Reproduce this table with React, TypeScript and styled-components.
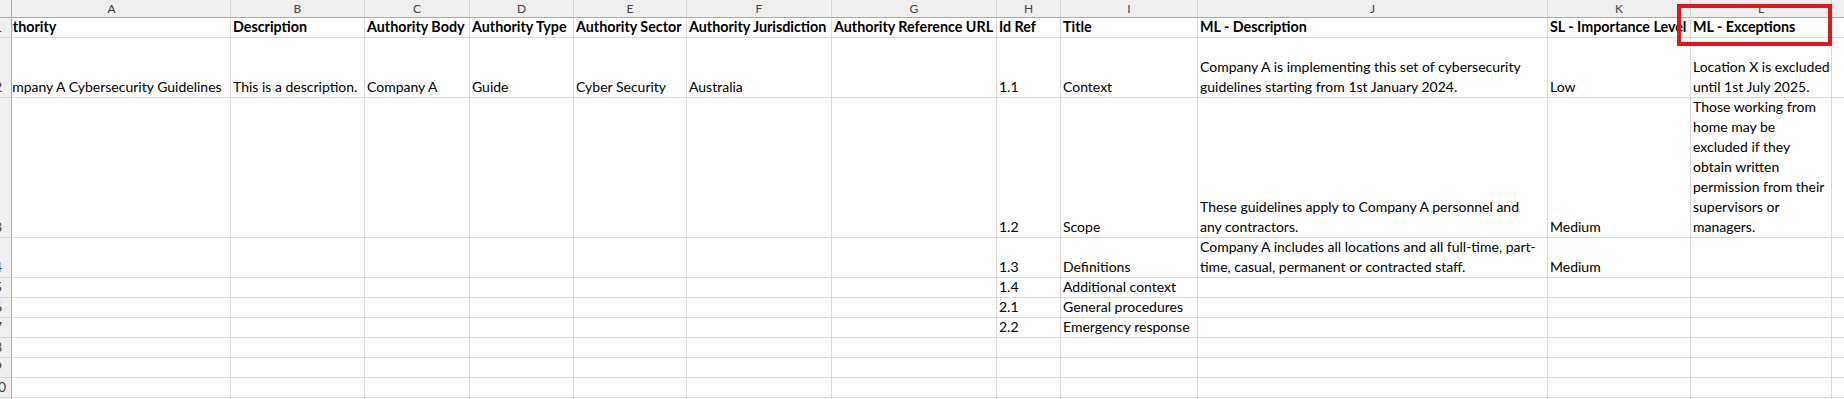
import React from "react";
import styled, { createGlobalStyle } from "styled-components";

const GlobalStyle = createGlobalStyle`
  html, body {
    margin: 0;
    padding: 0;
    background: #ffffff;
    overflow: hidden;
  }
`;

const columns = [
  { letter: "A", width: 219, shift: 19 },
  { letter: "B", width: 134 },
  { letter: "C", width: 105 },
  { letter: "D", width: 104 },
  { letter: "E", width: 113 },
  { letter: "F", width: 145 },
  { letter: "G", width: 165 },
  { letter: "H", width: 64 },
  { letter: "I", width: 137 },
  { letter: "J", width: 350 },
  { letter: "K", width: 143 },
  { letter: "L", width: 141 },
  { letter: "M", width: 100 },
];

const rowHeights = [20, 60, 140, 40, 20, 20, 20, 20, 20, 20, 20];

const rows: string[][] = [
  [
    "Authority",
    "Description",
    "Authority Body",
    "Authority Type",
    "Authority Sector",
    "Authority Jurisdiction",
    "Authority Reference URL",
    "Id Ref",
    "Title",
    "ML - Description",
    "SL - Importance Level",
    "ML - Exceptions",
  ],
  [
    "Company A Cybersecurity Guidelines",
    "This is a description.",
    "Company A",
    "Guide",
    "Cyber Security",
    "Australia",
    "",
    "1.1",
    "Context",
    "Company A is implementing this set of cybersecurity\nguidelines starting from 1st January 2024.",
    "Low",
    "Location X is excluded\nuntil 1st July 2025.",
  ],
  [
    "", "", "", "", "", "", "",
    "1.2",
    "Scope",
    "These guidelines apply to Company A personnel and\nany contractors.",
    "Medium",
    "Those working from\nhome may be\nexcluded if they\nobtain written\npermission from their\nsupervisors or\nmanagers.",
  ],
  [
    "", "", "", "", "", "", "",
    "1.3",
    "Definitions",
    "Company A includes all locations and all full-time, part-\ntime, casual, permanent or contracted staff.",
    "Medium",
    "",
  ],
  ["", "", "", "", "", "", "", "1.4", "Additional context", "", "", ""],
  ["", "", "", "", "", "", "", "2.1", "General procedures", "", "", ""],
  ["", "", "", "", "", "", "", "2.2", "Emergency response", "", "", ""],
];

const App = () => {
  return (
    <Viewport>
      <GlobalStyle />
      <Sheet $cols={columns.map((c) => c.width)} $rows={rowHeights}>
        <Corner />
        {columns.map((c) => (
          <ColumnHeader key={c.letter} $shift={c.shift || 0}>
            {c.letter}
          </ColumnHeader>
        ))}
        {rowHeights.map((_, r) => (
          <React.Fragment key={r}>
            <RowHeader>
              <RowNumber>{r + 1}</RowNumber>
            </RowHeader>
            {columns.map((c, ci) => (
              <Cell key={c.letter} $bold={r === 0}>
                <CellText $shift={c.shift || 0}>
                  {(rows[r] && rows[r][ci]) || ""}
                </CellText>
              </Cell>
            ))}
          </React.Fragment>
        ))}
      </Sheet>
      <Highlight />
    </Viewport>
  );
};

const Viewport = styled.div`
  position: relative;
  width: 1844px;
  height: 399px;
  overflow: hidden;
  background: #ffffff;
  font-family: Lato, "Liberation Sans", sans-serif;
`;

const Sheet = styled.div<{ $cols: number[]; $rows: number[] }>`
  display: grid;
  grid-template-columns: 12px ${(p) => p.$cols.map((w) => `${w}px`).join(" ")};
  grid-template-rows: 18px ${(p) => p.$rows.map((h) => `${h}px`).join(" ")};
  width: max-content;
`;

const Corner = styled.div`
  box-sizing: border-box;
  background: #efefef;
  border-right: 1px solid #ababab;
  border-bottom: 1px solid #ababab;
`;

const ColumnHeader = styled.div<{ $shift: number }>`
  box-sizing: border-box;
  background: #efefef;
  border-right: 1px solid #d6d6d6;
  border-bottom: 1px solid #ababab;
  display: flex;
  align-items: center;
  justify-content: center;
  padding-right: ${(p) => p.$shift}px;
  font-size: 12px;
  line-height: 17px;
  color: #444444;
  overflow: hidden;
`;

const RowHeader = styled.div`
  box-sizing: border-box;
  background: #efefef;
  border-right: 1px solid #ababab;
  border-bottom: 1px solid #d6d6d6;
  display: flex;
  align-items: flex-end;
  overflow: hidden;
`;

const RowNumber = styled.span`
  display: block;
  flex: 0 0 26px;
  margin-left: -15px;
  text-align: center;
  font-size: 14px;
  line-height: 20px;
  color: #444444;
`;

const Cell = styled.div<{ $bold: boolean }>`
  box-sizing: border-box;
  border-right: 1px solid #dadada;
  border-bottom: 1px solid #dadada;
  display: flex;
  align-items: flex-end;
  padding: 0 2px;
  overflow: hidden;
  font-size: ${(p) => (p.$bold ? "14.3px" : "14px")};
  line-height: 20px;
  font-weight: ${(p) => (p.$bold ? 700 : 400)};
  color: #000000;
`;

const CellText = styled.span<{ $shift: number }>`
  flex: none;
  white-space: pre;
  margin-left: ${(p) => -p.$shift}px;
`;

const Highlight = styled.div`
  position: absolute;
  left: 1677px;
  top: 4px;
  width: 155px;
  height: 42px;
  box-sizing: border-box;
  border: 4px solid #e3141c;
  pointer-events: none;
`;

export default App;
